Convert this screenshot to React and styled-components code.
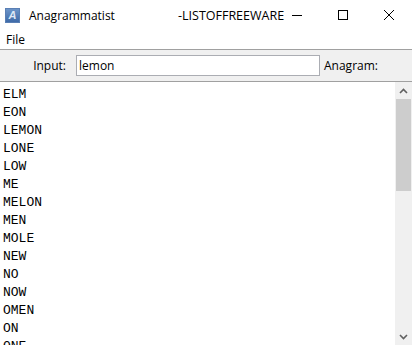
import React from "react";
import styled, { createGlobalStyle } from "styled-components";

const words = [
  "ELM", "EON", "LEMON", "LONE", "LOW", "ME", "MELON", "MEN", "MOLE",
  "NEW", "NO", "NOW", "OMEN", "ON", "ONE", "OWE", "OWN",
];

const Global = createGlobalStyle`
  html, body {
    margin: 0;
    padding: 0;
    background: #ffffff;
    overflow: hidden;
  }
  * { box-sizing: border-box; }
`;

const Window = styled.div`
  width: 412px;
  height: 345px;
  display: flex;
  flex-direction: column;
  font-family: "Open Sans", "Noto Sans", sans-serif;
  color: #000;
  overflow: hidden;
`;

const TitleBar = styled.div`
  height: 30px;
  flex-shrink: 0;
  display: flex;
  align-items: center;
  background: #ffffff;
  font-size: 12px;
  white-space: nowrap;
`;

const AppIcon = styled.div`
  width: 15px;
  height: 15px;
  flex-shrink: 0;
  margin: 0 9px 0 5px;
  background: linear-gradient(180deg, #6c94c8 0%, #3e6aa8 100%);
  border: 1px solid #5a7fb4;
  color: #dfe8f5;
  font: italic bold 11px "Liberation Sans", sans-serif;
  display: flex;
  align-items: center;
  justify-content: center;
`;

const AppName = styled.span`
  width: 149px;
  flex-shrink: 0;
`;

const Caption = styled.span`
  font-size: 12.5px;
  flex: 1;
  min-width: 0;
  overflow: visible;
`;

const CaptionButton = styled.div`
  width: ${({ w }) => w}px;
  flex-shrink: 0;
  height: 30px;
  display: flex;
  align-items: center;
  justify-content: center;
`;

const MenuBar = styled.div`
  height: 20px;
  flex-shrink: 0;
  display: flex;
  align-items: center;
  padding-left: 6px;
  font-size: 12px;
  background: #ffffff;
  border-bottom: 1px solid #a0a0a0;
`;

const Toolbar = styled.div`
  height: 32px;
  flex-shrink: 0;
  display: flex;
  align-items: center;
  background: #f0f0f0;
  border-bottom: 1px solid #a0a0a0;
  font-size: 12px;
`;

const Label = styled.span`
  width: ${({ w }) => w}px;
  text-align: ${({ align }) => align || "left"};
  padding-right: ${({ pr }) => pr || 0}px;
`;

const TextBox = styled.div`
  width: 244px;
  height: 21px;
  margin-right: 4px;
  background: #ffffff;
  border: 1px solid #abadb3;
  padding-left: 2px;
  display: flex;
  align-items: center;
`;

const ListArea = styled.div`
  flex: 1;
  display: flex;
  min-height: 0;
  background: #ffffff;
`;

const List = styled.div`
  flex: 1;
  padding: 4px 0 0 3px;
  font-family: "Liberation Mono", "Courier New", monospace;
  font-size: 13px;
  overflow: hidden;
`;

const Row = styled.div`
  height: 18px;
  line-height: 18px;
  white-space: pre;
`;

const Scrollbar = styled.div`
  width: 17px;
  display: flex;
  flex-direction: column;
  background: #f0f0f0;
`;

const ArrowButton = styled.div`
  height: 17px;
  display: flex;
  align-items: center;
  justify-content: center;
`;

const Track = styled.div`
  flex: 1;
  padding: 0 1px;
`;

const Thumb = styled.div`
  height: 92px;
  background: #cdcdcd;
`;

const Chevron = ({ up }) => (
  <svg width="9" height="6" viewBox="0 0 9 6">
    <path
      d={up ? "M1 5 L4.5 1.5 L8 5" : "M1 1 L4.5 4.5 L8 1"}
      fill="none"
      stroke="#606060"
      strokeWidth="1.6"
    />
  </svg>
);

export default function App() {
  return (
    <Window>
      <Global />
      <TitleBar>
        <AppIcon>A</AppIcon>
        <AppName>Anagrammatist</AppName>
        <Caption>-LISTOFFREEWARE</Caption>
        <CaptionButton w={46}>
          <svg width="10" height="10" viewBox="0 0 10 10">
            <path d="M0 5.5 H10" stroke="#000" strokeWidth="1" />
          </svg>
        </CaptionButton>
        <CaptionButton w={46}>
          <svg width="10" height="10" viewBox="0 0 10 10">
            <rect x="0.5" y="0.5" width="9" height="9" fill="none" stroke="#000" />
          </svg>
        </CaptionButton>
        <CaptionButton w={46}>
          <svg width="10" height="10" viewBox="0 0 10 10">
            <path d="M0 0 L10 10 M10 0 L0 10" stroke="#000" strokeWidth="1" />
          </svg>
        </CaptionButton>
      </TitleBar>
      <MenuBar>File</MenuBar>
      <Toolbar>
        <Label w={76} align="right" pr={10}>Input:</Label>
        <TextBox>lemon</TextBox>
        <Label w={80}>Anagram:</Label>
      </Toolbar>
      <ListArea>
        <List>
          {words.map((w) => (
            <Row key={w}>{w}</Row>
          ))}
        </List>
        <Scrollbar>
          <ArrowButton>
            <Chevron up />
          </ArrowButton>
          <Track>
            <Thumb />
          </Track>
          <ArrowButton>
            <Chevron />
          </ArrowButton>
        </Scrollbar>
      </ListArea>
    </Window>
  );
}
